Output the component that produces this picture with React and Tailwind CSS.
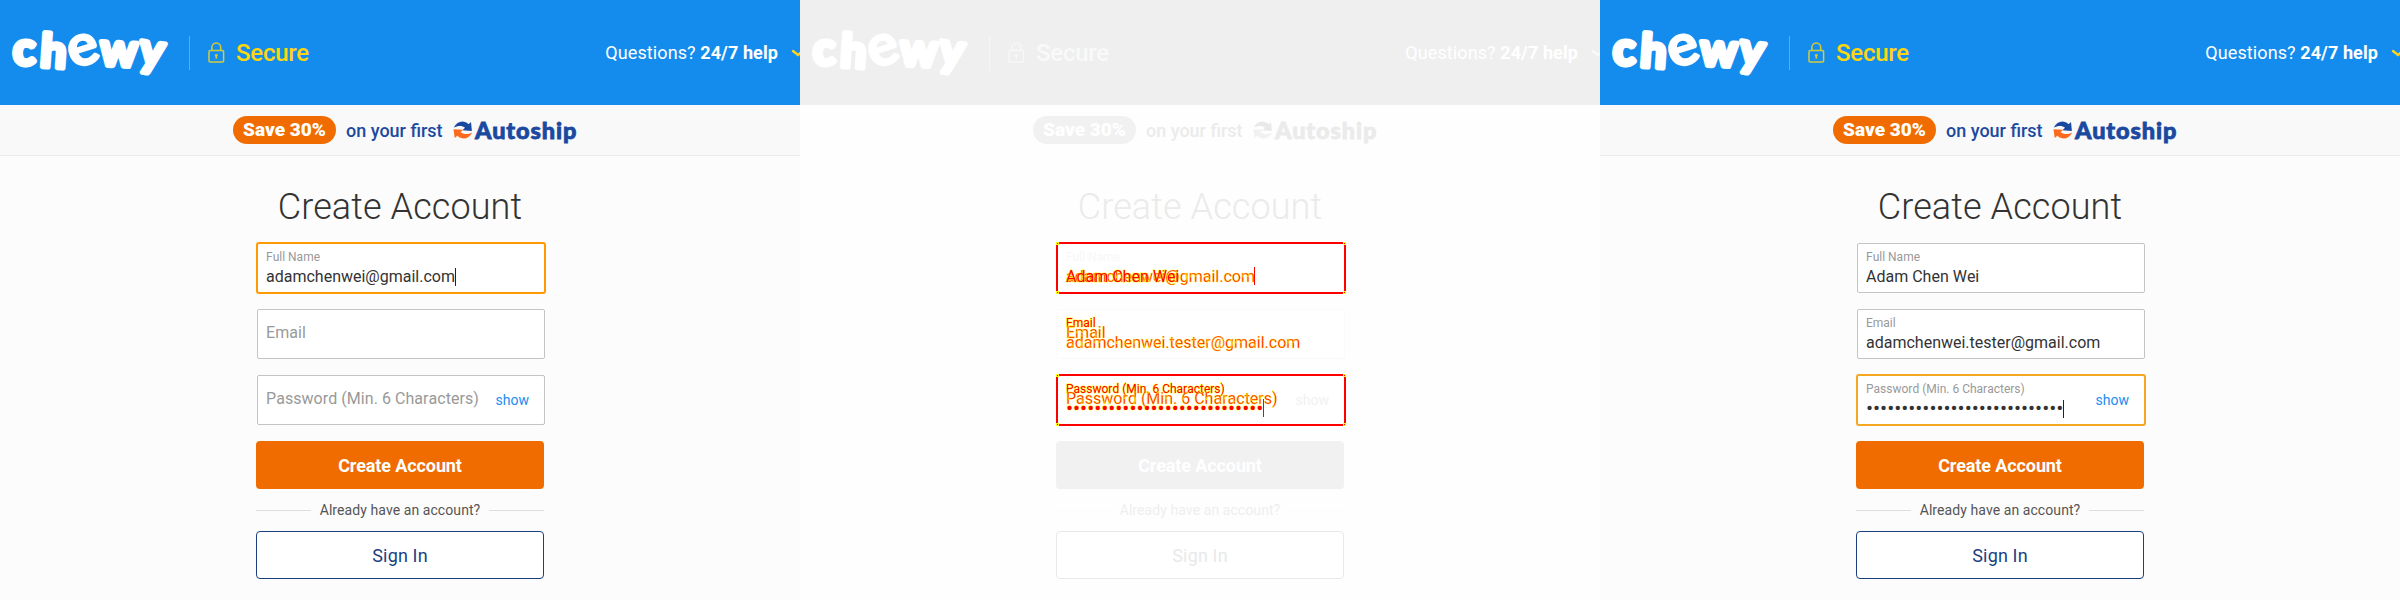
import React from 'react';

const themes = {
  live: {
    page: 'bg-[#fcfcfc]', header: 'bg-[#148cee]', divider: 'bg-[#58adf3]', lock: 'text-[#d2cb3d]', secure: 'text-[#ffd60a]',
    help: 'text-white', chevron: 'text-[#ffd21f]', promo: 'bg-[#f9f9f9] border-[#ebebeb]', pill: 'bg-[#f06c00] text-white',
    promoText: 'text-[#1c49a0]', arrowA: '#1c49a0', arrowB: '#fa6b1e', title: 'text-[#333333]', field: 'border-[#c4c4c4] bg-white',
    label: 'text-[#999999]', show: 'text-[#1c8cee]', button: 'bg-[#f06c00] text-white', line: 'bg-[#dddddd]', already: 'text-[#555555]',
    signIn: 'border-[#1b3f7f] bg-white text-[#1b3f7f]',
  },
  muted: {
    page: 'bg-[#fefefe]', header: 'bg-[#efefef]', divider: 'bg-[#f6f6f6]', lock: 'text-[#f7f7f7]', secure: 'text-[#f9f9f9]',
    help: 'text-white', chevron: 'text-[#f9f9f9]', promo: 'bg-[#fefefe] border-[#fcfcfc]', pill: 'bg-[#f1f1f1] text-white',
    promoText: 'text-[#ebebeb]', arrowA: '#e9e9e9', arrowB: '#f1f1f1', title: 'text-[#ebebeb]', field: 'border-[#fafafa] bg-white',
    label: 'text-[#f7f7f7]', show: 'text-[#f1f1f1]', button: 'bg-[#f1f1f1] text-white', line: 'bg-[#fbfbfb]', already: 'text-[#eeeeee]',
    signIn: 'border-[#e9e9e9] bg-white text-[#e9e9e9]',
  },
};

function Logo() {
  return (
    <svg width="170" height="60" viewBox="0 0 170 60" className="shrink-0 overflow-visible"
      fill="#fff" stroke="#fff" strokeLinejoin="round" fontFamily="Lato, sans-serif" fontWeight="700">
      <text strokeWidth="5" fontSize="46" x="13 39.500 73 99.500 138" y="42 43.500 46 42 41" rotate="0 4 -18 3 8">
        ch<tspan fontSize="58" strokeWidth="2">e</tspan>wy
      </text>
    </svg>
  );
}

function Lock({ className }) {
  return (
    <svg width="17" height="21" viewBox="0 0 17 21" className={className} fill="none" stroke="currentColor" strokeWidth="1.5">
      <rect x="1" y="8.6" width="14.6" height="11.4" rx="1.2" />
      <path d="M3.9 8.6V5.4a4.4 4.4 0 0 1 8.8 0v3.2" />
      <circle cx="8.3" cy="13.4" r="1.4" fill="currentColor" stroke="none" />
      <path d="M8.3 13.5v3.3" />
    </svg>
  );
}

function Arrows({ a, b }) {
  return (
    <svg width="20" height="18" viewBox="0 0 20 18" className="shrink-0">
      <path fill={a} d="M.8 6.600C2.800 2.600 6 .6 9.200.6c2.400 0 4.600.9 6.400 2.600L18 .9l.9 9-9.500-.6 2.600-2.600C9.500 4.400 5 4.200.8 6.600z" />
      <path fill={b} d="M19.200 11.400c-2 4-5.200 6-8.400 6-2.400 0-4.600-.9-6.400-2.600L1.700 17.100.5 8.300l9.500.4-2.400 2.600c3.100 2.300 7.400 2.500 11.600.1z" />
    </svg>
  );
}

function Header({ t }) {
  return (
    <header className={`flex h-[105px] items-center ${t.header}`}>
      <Logo />
      <div className={`ml-[19px] h-[34px] w-px ${t.divider}`} />
      <Lock className={`ml-[18px] ${t.lock}`} />
      <span className={`ml-[11px] text-[24px] font-medium tracking-[-0.25px] ${t.secure}`}>Secure</span>
      <span className={`ml-auto pr-[13px] text-[18px] whitespace-pre tracking-[0.1px] ${t.help}`}>Questions? <b className="font-bold">24/7 help</b></span>
      <div className={`w-[9px] overflow-hidden ${t.chevron}`}>
        <svg width="14" height="8" viewBox="0 0 14 8" fill="none" stroke="currentColor" strokeWidth="2.500" strokeLinecap="round">
          <path d="M2 2l5 4 5-4" />
        </svg>
      </div>
    </header>
  );
}

function Promo({ t }) {
  return (
    <div className={`flex h-[51px] items-center border-b pl-[233px] ${t.promo}`}>
      <span className={`flex h-7 w-[103px] items-center justify-center rounded-full text-[19px] font-black ${t.pill}`}>Save 30%</span>
      <span className={`ml-[10px] w-[98px] text-[18px] font-medium whitespace-nowrap ${t.promoText}`}>on your first</span>
      <span className={`ml-[9px] flex items-center font-[Lato] text-[23.500px] font-black tracking-[0.9px] [-webkit-text-stroke:0.8px_currentColor] ${t.promoText}`}>
        <Arrows a={t.arrowA} b={t.arrowB} />
        <span className="ml-[2px] leading-7">Autoship</span>
      </span>
    </div>
  );
}

function Caret() {
  return <span className="h-[18px] w-px bg-[#222222]" />;
}

function Dots({ className = 'text-[#333333]' }) {
  return (
    <span className={`flex h-[21px] items-center ${className}`}>
      {Array.from({ length: 28 }, (_, i) => (
        <span key={i} className="flex w-[7.05px] justify-center text-[21px] leading-[19px]">•</span>
      ))}
    </span>
  );
}

function Field({ t, label, value, focus, dots, action }) {
  const filled = value || dots;
  return (
    <div className={`flex h-[50px] rounded-[2px] border pr-[15px] pl-2 [font-kerning:none] ${focus ? `bg-white ring-1 ${focus}` : t.field}`}>
      {filled ? (
        <div className="flex flex-1 flex-col pt-[5px]">
          <span className={`h-4 text-[12px] leading-4 ${t.label}`}>{label}</span>
          <span className="mt-px flex h-[21px] items-center text-[16px] leading-[21px] text-[#333333]">
            {dots ? <Dots /> : value}
            {focus && <Caret />}
          </span>
        </div>
      ) : (
        <span className={`flex-1 text-[16px] leading-[45px] tracking-[0.05px] ${t.label}`}>{label}</span>
      )}
      {action && <span className={`self-center text-[14px] ${t.show}`}>show</span>}
    </div>
  );
}

function DiffLine({ top, size, dense, children }) {
  const s = size === 'sm' ? 'text-[12px] leading-4' : 'text-[16px] leading-[21px]';
  const edge = dense || size === 'sm'
    ? '[-webkit-text-stroke:0.8px_#ffff00] [paint-order:stroke]'
    : '[-webkit-text-stroke:0.35px_#ffff00]';
  return (
    <span className={`absolute left-2 whitespace-pre text-[#ff0000] [font-kerning:none] ${edge} ${top} ${s}`}>{children}</span>
  );
}

function DiffFrame() {
  const corner = 'absolute size-[3px] border border-[#ffff00] bg-[#ff0000]';
  return (
    <div className="absolute -inset-[2px] border-2 border-[#ff0000]">
      <i className={`${corner} -top-[2px] -left-[2px]`} />
      <i className={`${corner} -top-[2px] -right-[2px]`} />
      <i className={`${corner} -bottom-[2px] -left-[2px]`} />
      <i className={`${corner} -right-[2px] -bottom-[2px]`} />
    </div>
  );
}

function DiffFields({ t }) {
  const box = `relative h-[50px] rounded-[2px] border ${t.field}`;
  return (
    <>
      <div className={box}>
        <DiffFrame />
        <span className={`absolute top-[5px] left-2 text-[12px] leading-4 ${t.label}`}>Full Name</span>
        <DiffLine top="top-[22px]">adamchenwei@gmail.com</DiffLine>
        <DiffLine top="top-[22px]" dense>Adam Chen Wei</DiffLine>
        <span className="absolute top-[23px] left-[196px] h-[18px] w-px bg-[#ff0000]" />
      </div>
      <div className={box}>
        <DiffLine top="top-[5px]" size="sm">Email</DiffLine>
        <DiffLine top="top-[12px]">Email</DiffLine>
        <DiffLine top="top-[22px]">adamchenwei.tester@gmail.com</DiffLine>
      </div>
      <div className={box}>
        <DiffFrame />
        <DiffLine top="top-[5px]" size="sm">Password (Min. 6 Characters)</DiffLine>
        <DiffLine top="top-[12px]">Password (Min. 6 Characters)</DiffLine>
        <DiffLine top="top-[22px]" dense><Dots className="text-[#ff0000]" /></DiffLine>
        <span className="absolute top-[23px] left-[205px] h-[18px] w-px bg-[#ff0000]" />
        <span className={`absolute top-[14px] right-[15px] text-[14px] leading-5 ${t.show}`}>show</span>
      </div>
    </>
  );
}

function Panel({ t, children }) {
  return (
    <section className={`flex h-[600px] w-[800px] shrink-0 flex-col ${t.page}`}>
      <Header t={t} />
      <Promo t={t} />
      <h1 className={`mt-[27px] text-center text-[36px] leading-[48px] font-light tracking-[0.1px] ${t.title}`}>Create Account</h1>
      <div className="mt-3 ml-[257px] flex w-[288px] flex-col gap-4">{children}</div>
      <div className="mt-4 ml-[256px] flex w-[288px] flex-col">
        <button className={`h-12 rounded text-[18px] font-bold tracking-[-0.1px] ${t.button}`}>Create Account</button>
        <div className={`flex h-[42px] items-center justify-between text-[14px] tracking-[0.08px] ${t.already}`}>
          <i className={`h-px w-[55px] ${t.line}`} />
          Already have an account?
          <i className={`h-px w-[55px] ${t.line}`} />
        </div>
        <button className={`h-12 rounded border text-[18px] tracking-[0.15px] ${t.signIn}`}>Sign In</button>
      </div>
    </section>
  );
}

export default function App() {
  const { live, muted } = themes;
  return (
    <main className="flex h-[600px] w-[2400px] overflow-hidden font-[Roboto,sans-serif]">
      <Panel t={live}>
        <Field t={live} label="Full Name" value="adamchenwei@gmail.com" focus="border-[#ff9900] ring-[#ff9900]" />
        <Field t={live} label="Email" />
        <Field t={live} label="Password (Min. 6 Characters)" action />
      </Panel>
      <Panel t={muted}>
        <DiffFields t={muted} />
      </Panel>
      <Panel t={live}>
        <Field t={live} label="Full Name" value="Adam Chen Wei" />
        <Field t={live} label="Email" value="adamchenwei.tester@gmail.com" />
        <Field t={live} label="Password (Min. 6 Characters)" dots focus="border-[#f5a623] ring-[#f5a623]" action />
      </Panel>
    </main>
  );
}
